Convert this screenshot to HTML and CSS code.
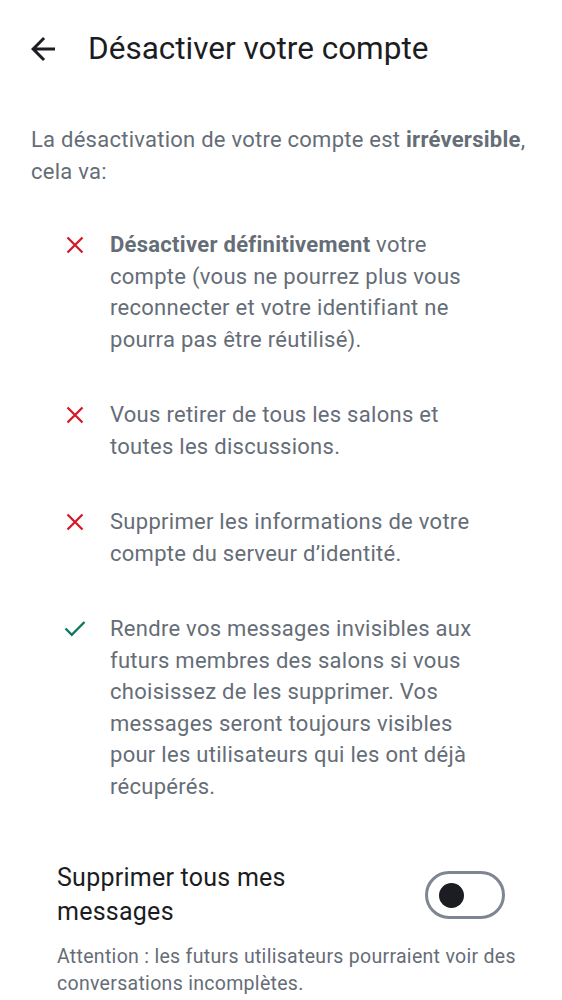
FILE: index.html
```html
<!DOCTYPE html>
<html lang="fr">
<head>
<meta charset="utf-8">
<title>Désactiver votre compte</title>
<link rel="stylesheet" href="styles.css">
</head>
<body>
<header class="topbar">
  <button class="back" aria-label="Retour">
    <svg viewBox="0 0 24 24" width="36" height="36"><path d="M20 11H7.83l5.59-5.59L12 4l-8 8 8 8 1.41-1.41L7.83 13H20v-2z" fill="#1b1d22"/></svg>
  </button>
  <h1 class="title">Désactiver votre compte</h1>
</header>
<main class="content">
  <p class="intro">La désactivation de votre compte est <strong>irréversible</strong>, cela va:</p>
  <ul class="list">
    <li class="item">
      <svg class="icon" viewBox="0 0 24 24" width="24" height="24"><path d="M4.5 4.5L19.5 19.5M19.5 4.5L4.5 19.5" stroke="#d51928" stroke-width="2.3" fill="none"/></svg>
      <span class="text"><strong>Désactiver définitivement</strong> votre compte (vous ne pourrez plus vous reconnecter et votre identifiant ne pourra pas être réutilisé).</span>
    </li>
    <li class="item">
      <svg class="icon" viewBox="0 0 24 24" width="24" height="24"><path d="M4.5 4.5L19.5 19.5M19.5 4.5L4.5 19.5" stroke="#d51928" stroke-width="2.3" fill="none"/></svg>
      <span class="text">Vous retirer de tous les salons et toutes les discussions.</span>
    </li>
    <li class="item">
      <svg class="icon" viewBox="0 0 24 24" width="24" height="24"><path d="M4.5 4.5L19.5 19.5M19.5 4.5L4.5 19.5" stroke="#d51928" stroke-width="2.3" fill="none"/></svg>
      <span class="text">Supprimer les informations de votre compte du serveur d’identité.</span>
    </li>
    <li class="item">
      <svg class="icon" viewBox="0 0 24 24" width="24" height="24"><path d="M2.5 11.5L8.8 17.8L21.5 5" stroke="#0d7a5f" stroke-width="2.4" fill="none"/></svg>
      <span class="text">Rendre vos messages invisibles aux futurs membres des salons si vous choisissez de les supprimer. Vos messages seront toujours visibles pour les utilisateurs qui les ont déjà récupérés.</span>
    </li>
  </ul>
  <section class="option">
    <div class="option-row">
      <span class="option-label">Supprimer tous mes messages</span>
      <span class="switch" role="switch" aria-checked="false"><span class="knob"></span></span>
    </div>
    <p class="option-help">Attention : les futurs utilisateurs pourraient voir des conversations incomplètes.</p>
  </section>
</main>
</body>
</html>
```

FILE: styles.css
```css
html, body {
  margin: 0;
  padding: 0;
  background: #ffffff;
}
body {
  font-family: Roboto, "Liberation Sans", sans-serif;
  color: #656d77;
}
.topbar {
  height: 98px;
  display: flex;
  align-items: center;
  padding-left: 25px;
  box-sizing: border-box;
}
.back {
  width: 36px;
  height: 36px;
  padding: 0;
  border: 0;
  background: none;
  display: flex;
}
.title {
  margin: 0 0 0 27px;
  font-size: 31.5px;
  font-weight: 400;
  color: #1b1d22;
  line-height: 38px;
}
.content {
  padding: 26px 24px 0 31px;
}
.intro {
  margin: 0;
  font-size: 22px;
  line-height: 32px;
  letter-spacing: 0.25px;
}
.intro strong, .text strong {
  font-weight: 700;
}
.list {
  list-style: none;
  margin: 41px 0 0 0;
  padding: 0 0 0 32px;
  display: flex;
  flex-direction: column;
  gap: 44px;
}
.item {
  display: flex;
  align-items: flex-start;
  gap: 23px;
}
.icon {
  flex: none;
  margin-top: 4px;
}
.text {
  font-size: 22px;
  line-height: 31.5px;
  letter-spacing: 0.28px;
  max-width: 380px;
}
.option {
  margin: 59px 0 0 26px;
}
.option-row {
  display: flex;
  align-items: center;
  gap: 64px;
  padding-right: 33px;
}
.option-label {
  flex: 1;
  font-size: 25px;
  line-height: 34px;
  color: #1b1d22;
  letter-spacing: 0.25px;
}
.switch {
  flex: none;
  width: 80px;
  height: 48px;
  box-sizing: border-box;
  border: 3px solid #7e8691;
  border-radius: 24px;
  display: flex;
  align-items: center;
  padding-left: 11px;
}
.knob {
  width: 25px;
  height: 25px;
  border-radius: 50%;
  background: #1b1d22;
}
.option-help {
  margin: 14px 0 0 0;
  font-size: 19.5px;
  line-height: 27px;
  letter-spacing: 0.3px;
}
```
